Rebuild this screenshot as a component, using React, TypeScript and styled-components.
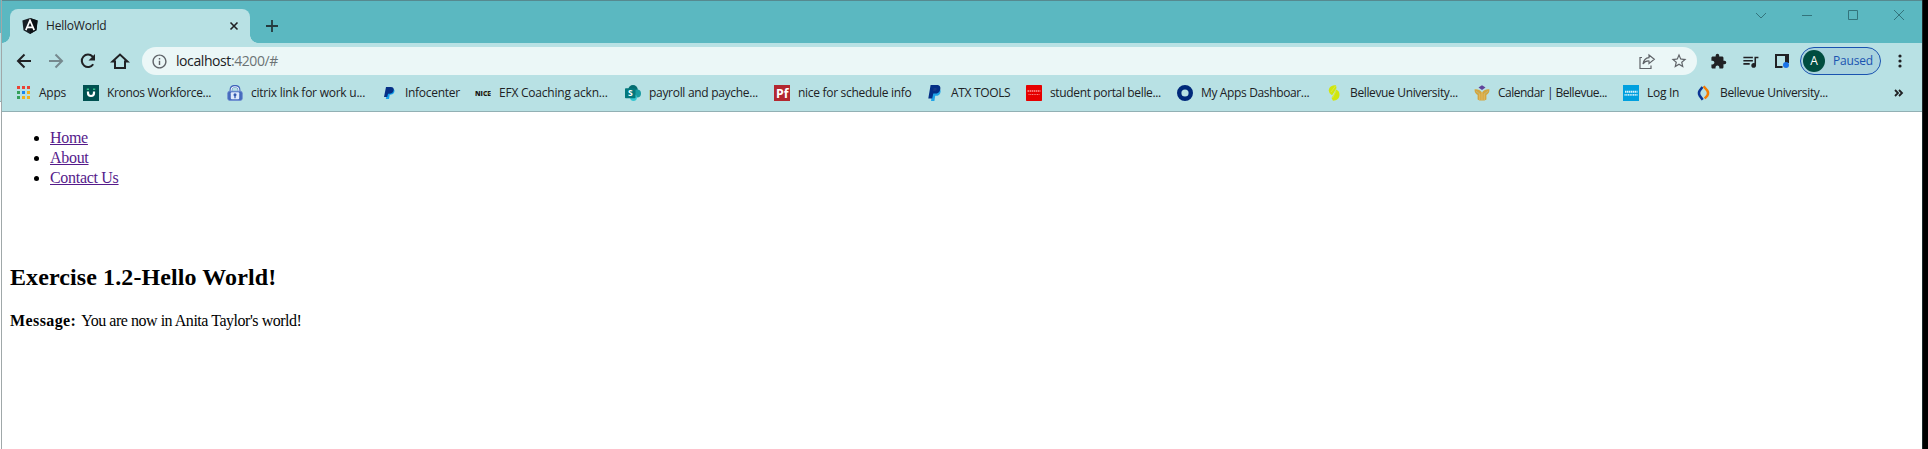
import React from 'react';
import styled, { createGlobalStyle } from 'styled-components';
import { MdExtension, MdQueueMusic, MdStarBorder, MdInfoOutline } from 'react-icons/md';

const ui = '"Open Sans", "Noto Sans", sans-serif';

const GlobalStyle = createGlobalStyle`
  * { box-sizing: border-box; }
  body { margin: 0; background: #fff; overflow: hidden; }
`;

const Desktop = styled.div`
  display: grid;
  grid-template-columns: 1px 1921px 6px;
  height: 449px;
  background: #fff;
`;
const WindowBehind = styled.div`
  background: linear-gradient(#5bb8c1 0 33px, #b8e1e4 33px 101px, #92adb0 101px 102px, #fff 102px);
`;
const ScreenEdge = styled.div`
  background: #000;
  border-left: 1px solid #1c2a2b;
`;
const Browser = styled.main`
  display: flex;
  flex-direction: column;
  border-left: 1px solid #a0a8a9;
  background: #fff;
`;
const TabStrip = styled.header`
  display: flex;
  align-items: flex-end;
  height: 43px;
  border-top: 1px solid #56898f;
  background: #5bb8c1;
  padding-left: 8px;
`;
const Tab = styled.div`
  position: relative;
  display: flex;
  align-items: center;
  width: 240px;
  height: 34px;
  padding: 0 10px 0 12px;
  border-radius: 8px 8px 0 0;
  background: #b8e1e4;
  &::before, &::after {
    content: '';
    position: absolute;
    bottom: 0;
    width: 8px;
    height: 8px;
  }
  &::before { left: -8px; background: radial-gradient(circle at 0 0, transparent 7.5px, #b8e1e4 8px); }
  &::after { right: -8px; background: radial-gradient(circle at 100% 0, transparent 7.5px, #b8e1e4 8px); }
`;
const TabTitle = styled.span`
  flex: 1;
  margin-left: 8px;
  font: 12px/16px ${ui};
  letter-spacing: -0.2px;
  color: #202124;
`;
const NewTab = styled.div`
  display: flex;
  align-items: center;
  height: 34px;
  margin-left: 16px;
`;
const WindowButtons = styled.div`
  display: flex;
  align-self: flex-start;
  gap: 30px;
  margin: 6px 15px 0 auto;
`;
const Toolbar = styled.nav`
  display: flex;
  align-items: center;
  height: 36px;
  padding-left: 12px;
  background: #b8e1e4;
`;
const NavButtons = styled.div`
  display: flex;
  flex: none;
  gap: 12px;
  width: 128px;
`;
const Omnibox = styled.div`
  display: flex;
  flex: none;
  align-items: center;
  width: 1555px;
  height: 28px;
  padding: 0 9px;
  border-radius: 14px;
  background: #ebf7f7;
  color: #5f6368;
`;
const Url = styled.span`
  flex: 1;
  margin-left: 8px;
  font: 14px/20px ${ui};
  letter-spacing: -0.42px;
  color: #6c7375;
  b { font-weight: 400; color: #202124; }
`;
const OmniActions = styled.div`
  display: flex;
  align-items: center;
  gap: 14px;
`;
const Extensions = styled.div`
  display: flex;
  align-items: center;
  gap: 14px;
  margin: 0 10px 0 13px;
  color: #202124;
`;
const Profile = styled.div`
  display: flex;
  flex: none;
  align-items: center;
  width: 81px;
  height: 28px;
  margin-right: 11px;
  padding-left: 2px;
  border: 1px solid #1a53b0;
  border-radius: 14px;
  background: #abd4de;
  font: 12px/16px ${ui};
  letter-spacing: -0.2px;
  color: #1a53b0;
`;
const Avatar = styled.span`
  width: 22px;
  height: 22px;
  margin-right: 8px;
  border-radius: 50%;
  background: #004d40;
  color: #fff;
  font: 12px/22px ${ui};
  text-align: center;
`;
const BookmarkBar = styled.nav`
  display: flex;
  align-items: center;
  gap: 16px;
  height: 33px;
  padding: 0 18px 5px 13px;
  border-bottom: 1px solid #92b0b4;
  background: #b8e1e4;
`;
const Bookmark = styled.div`
  display: flex;
  align-items: center;
  flex: none;
  gap: 8px;
`;
const BookmarkLabel = styled.span<{ $width: number; $spacing: number }>`
  width: ${(p) => p.$width}px;
  font: 12px/16px ${ui};
  letter-spacing: ${(p) => p.$spacing}px;
  white-space: nowrap;
  color: #202124;
`;
const Overflow = styled.div`
  display: flex;
  margin-left: auto;
`;
const Page = styled.section`
  padding: 16px 8px 0;
  font: 16px/20px "Liberation Serif", serif;
  color: #000;
`;
const Links = styled.ul`
  margin: 0 0 75px;
  padding-left: 40px;
`;
const PageLink = styled.a`
  color: #551a8b;
  text-decoration: underline;
  letter-spacing: -0.3px;
`;
const Heading = styled.h2`
  margin: 0 0 20px;
  font-size: 24px;
  line-height: 28px;
  letter-spacing: 0.1px;
`;
const Message = styled.p`
  margin: 0;
  letter-spacing: -0.47px;
  b { margin-right: 2px; letter-spacing: 0.4px; }
`;

const Svg = ({ size = 16, children }: { size?: number; children: React.ReactNode }) => (
  <svg width={size} height={size} viewBox={`0 0 ${size} ${size}`} fill="none">{children}</svg>
);

const PayPal = () => (
  <Svg>
    <path d="M6 4h6.500c1.500 1 1.300 3.100.6 4.500-.7 1.600-2.100 2.300-4 2.300H8.200L7.400 16H4z" fill="#1fa4e8" />
    <path d="M3.600 0h5.800c3.500 0 4.500 2 3.800 4.700-.7 2.800-2.500 3.900-5.300 3.900H6.300L5.200 13.400H1.300z" fill="#042f86" />
    <path d="M6.700 3h1.600c1.300 0 1.700.6 1.400 1.600-.3 1-1 1.300-2.100 1.300H6z" fill="#173a86" />
  </Svg>
);
const PayPalSmall = () => (
  <Svg>
    <path d="M7 4h5.700c1.200 1 .9 3-.1 4.300-.8 1-2 1.400-3.300 1.400h-.6L8 14H4.800z" fill="#14a0ea" />
    <path d="M5 2h4.800c2.500 0 3.300 1.500 2.800 3.500C12 7.800 10.500 8.700 8.400 8.700H7L6.200 12H3z" fill="#062f87" />
  </Svg>
);
const AppsGrid = () => {
  const colors = ['#ea4335', '#ea4335', '#ea4335', '#34a05a', '#1a86f0', '#f2b01e', '#34a05a', '#f2b01e', '#f2b01e'];
  return (
    <Svg>
      {colors.map((c, i) => <rect key={i} x={2 + (i % 3) * 5} y={1 + Math.floor(i / 3) * 5} width="3" height="3" fill={c} />)}
    </Svg>
  );
};
const Kronos = () => (
  <Svg>
    <rect width="16" height="16" fill="#005151" />
    <path d="M5 6.500V8a3 3 0 0 0 6 0V6.500" stroke="#fff" strokeWidth="2.200" />
    <path d="M3.800 4.200H6M10 4.200h2.200" stroke="#35c58b" strokeWidth="1.500" />
  </Svg>
);
const Citrix = () => (
  <Svg>
    <path d="M3.900 7V5C3.900 2.500 5.300 1.200 8 1.200s4.100 1.300 4.100 3.800v2" stroke="#3f63ba" strokeWidth="2.600" />
    <path d="M4.200 7V5C4.200 3 5.500 1.700 8 1.700S11.800 3 11.800 5v2" stroke="#f3f8ff" strokeWidth="1.100" />
    <rect x=".7" y="6.200" width="14.600" height="9.200" rx="2" fill="#4569bd" stroke="#6b8ad0" strokeWidth=".8" />
    <rect x="3.800" y="7.200" width="8.400" height="7" rx="1" fill="#dfe9fb" />
    <circle cx="8" cy="9.800" r="1.500" fill="#3459b0" />
    <path d="M8 10v3.200" stroke="#3459b0" strokeWidth="1.300" />
  </Svg>
);
const Nice = () => (
  <Svg>
    <text x="0" y="10.800" fontSize="7" fontWeight="800" fontFamily="Open Sans, sans-serif" textLength="16" lengthAdjust="spacingAndGlyphs" fill="#161616">NICE</text>
    <path d="M8.500 8.300h1.800M13 8.300h2" stroke="#c79b27" strokeWidth=".7" />
  </Svg>
);
const SharePoint = () => (
  <Svg>
    <circle cx="8" cy="4.800" r="4.800" fill="#036c70" />
    <circle cx="12" cy="8.500" r="4" fill="#1a9ba1" />
    <circle cx="8.500" cy="12.600" r="3.400" fill="#37c6d0" />
    <rect y="3.300" width="10.500" height="10" rx=".8" fill="#03787c" />
    <text x="5.300" y="11.300" textAnchor="middle" fontSize="8.500" fontWeight="700" fontFamily="Open Sans, sans-serif" fill="#fff">S</text>
  </Svg>
);
const Pf = () => (
  <Svg>
    <rect width="16" height="16" fill="#b3272f" />
    <text x="2" y="12.500" fontSize="12" fontWeight="700" fontFamily="Open Sans, sans-serif" textLength="12.500" lengthAdjust="spacingAndGlyphs" fill="#fff">Pf</text>
  </Svg>
);
const Oracle = () => (
  <Svg>
    <rect width="16" height="16" rx=".7" fill="#e60000" />
    <path d="M1.500 6h13" stroke="#ff9d9d" strokeWidth="1.300" strokeDasharray="1.500 .6" />
    <path d="M2.500 9.500h11" stroke="#f58080" strokeWidth="1.100" strokeDasharray="1.100 .6" />
  </Svg>
);
const Ring = () => (
  <Svg><circle cx="8" cy="8" r="5.800" stroke="#00297a" strokeWidth="4.400" /></Svg>
);
const Swirl = () => (
  <Svg>
    <path d="M10 .2C6 .1 2.800 2 2.800 5.200c0 2.200 1.300 3.800 3.300 5L8 7.500 10.500 3z" fill="#d0e60e" />
    <path d="M10 4.500c2.600 1 3.500 2.700 3.500 5.200 0 3.500-2.600 5.900-6.500 6L5.500 13 8 9z" fill="#d0e60e" />
    <path d="M9.500 1 5 7M10 6l-3.500 7" stroke="#e5ef76" strokeWidth=".5" />
  </Svg>
);
const Tulip = () => (
  <Svg>
    <path d="M.6 4.300C3 3.800 6 4.500 8 7.500c2-3 5-3.700 7.400-3.200.3 3-1 4.700-3 5.700v4.500L10.500 15.500h-5L3.600 14.500V10C1.600 9 .3 7.300.6 4.300" fill="#d4a63f" />
    <path d="m8 .3 3.500 2.200L8 5 4.500 2.500z" fill="#60439a" />
    <path d="M8 7v8M5.800 9v6M10.200 9v6" stroke="#e9c470" strokeWidth=".8" />
    <path d="M2 6.300 6 9M14 6.300 10 9" stroke="#b8c193" strokeWidth=".7" />
  </Svg>
);
const DailyAccess = () => (
  <Svg>
    <rect width="16" height="16" fill="#00a0df" />
    <path d="M2 6.800h12.500" stroke="#d8f2fc" strokeWidth="2" strokeDasharray="1.500 .5" />
    <path d="M1.500 9.800h13" stroke="#c5ebfa" strokeWidth="1.800" strokeDasharray="1.200 .5" />
  </Svg>
);
const Hoops = () => (
  <Svg>
    <path d="M6.500 2 3.800 5.500c-1 1.500-1 3.500-.2 5L6.700 14.800" stroke="#0b3595" strokeWidth="2.500" />
    <path d="m7.600 1.200 3.600 4.300c1 1.500 1 3.500.2 5L8.700 13.500" stroke="#f57c00" strokeWidth="2.500" />
  </Svg>
);

const bookmarks: { icon: React.ReactNode; text: string; width: number; spacing: number }[] = [
  { icon: <AppsGrid />, text: 'Apps', width: 28, spacing: -0.25 },
  { icon: <Kronos />, text: 'Kronos Workforce...', width: 104, spacing: -0.34 },
  { icon: <Citrix />, text: 'citrix link for work u...', width: 114, spacing: -0.24 },
  { icon: <PayPalSmall />, text: 'Infocenter', width: 54, spacing: -0.3 },
  { icon: <Nice />, text: 'EFX Coaching ackn...', width: 110, spacing: -0.22 },
  { icon: <SharePoint />, text: 'payroll and payche...', width: 109, spacing: -0.3 },
  { icon: <Pf />, text: 'nice for schedule info', width: 113, spacing: -0.3 },
  { icon: <PayPal />, text: 'ATX TOOLS', width: 59, spacing: -0.34 },
  { icon: <Oracle />, text: 'student portal belle...', width: 111, spacing: -0.36 },
  { icon: <Ring />, text: 'My Apps Dashboar...', width: 109, spacing: -0.36 },
  { icon: <Swirl />, text: 'Bellevue University...', width: 108, spacing: -0.36 },
  { icon: <Tulip />, text: 'Calendar | Bellevue...', width: 109, spacing: -0.5 },
  { icon: <DailyAccess />, text: 'Log In', width: 33, spacing: -0.3 },
  { icon: <Hoops />, text: 'Bellevue University...', width: 108, spacing: -0.36 },
];

export default function App() {
  return (
    <>
      <GlobalStyle />
      <Desktop>
        <WindowBehind />
        <Browser>
          <TabStrip>
            <Tab>
              <Svg>
                <path d="M8 0 15.600 2.600 14.500 12.200 8 16 1.500 12.200.4 2.600z" fill="#182026" />
                <path d="M8 0v16l6.500-3.800 1.100-9.600z" fill="#0b1115" />
                <path d="M3.800 12.200 8 2.500l4.200 9.700M5.600 9.300h4.800" stroke="#fff" strokeWidth="1.700" />
              </Svg>
              <TabTitle>HelloWorld</TabTitle>
              <Svg size={12}><path d="m2.500 2.500 7 7m0-7-7 7" stroke="#202124" strokeWidth="1.600" /></Svg>
            </Tab>
            <NewTab><Svg size={12}><path d="M6 0v12M0 6h12" stroke="#253a3e" strokeWidth="1.800" /></Svg></NewTab>
            <WindowButtons>
              <Svg><path d="m3 6 5 5 5-5" stroke="#33747c" /></Svg>
              <Svg><path d="M3 8.500h10" stroke="#33747c" /></Svg>
              <Svg><path d="M3.500 3.500h9v9h-9z" stroke="#33747c" /></Svg>
              <Svg><path d="m3 3 10 10M13 3 3 13" stroke="#33747c" /></Svg>
            </WindowButtons>
          </TabStrip>
          <Toolbar>
            <NavButtons>
              <Svg size={20}><path d="M17 10H4m6.500-6.500L4 10l6.500 6.500" stroke="#202124" strokeWidth="2" /></Svg>
              <Svg size={20}><path d="M3 10h13M9.500 3.500 16 10l-6.500 6.500" stroke="#76898e" strokeWidth="2" /></Svg>
              <Svg size={20}>
                <path d="M15.200 13.200A6.200 6.200 0 1 1 14.500 5.500L16 7" stroke="#202124" strokeWidth="2" />
                <path d="M17 3v6.500h-6.500z" fill="#202124" />
              </Svg>
              <Svg size={20}><path d="M2.500 10.500 10 3.500l7.500 7H15V17H5v-6.500z" stroke="#202124" strokeWidth="2" /></Svg>
            </NavButtons>
            <Omnibox>
              <MdInfoOutline size={17} />
              <Url><b>localhost</b>:4200/#</Url>
              <OmniActions>
                <Svg size={18}>
                  <path d="M4 5.500H2v11h11V13.500" stroke="#5f6368" strokeWidth="1.200" />
                  <path d="M11 3 16.300 7.300 11 11.600V9C8.500 8.800 6.500 9.800 5 12c.6-3.600 2.500-6 6-6.300z" stroke="#5f6368" strokeWidth="1.200" />
                </Svg>
                <MdStarBorder size={18} />
              </OmniActions>
            </Omnibox>
            <Extensions>
              <MdExtension size={17} />
              <MdQueueMusic size={19} />
              <Svg>
                <path d="M8.500 14H2V2h11v7" stroke="#202124" strokeWidth="2" />
                <path d="M11 1h4v9h-4z" fill="#202124" />
                <circle cx="12" cy="12" r="3" fill="#1a73e8" />
              </Svg>
            </Extensions>
            <Profile><Avatar>A</Avatar>Paused</Profile>
            <Svg><circle cx="8" cy="3" r="1.600" fill="#202124" /><circle cx="8" cy="8" r="1.600" fill="#202124" /><circle cx="8" cy="13" r="1.600" fill="#202124" /></Svg>
          </Toolbar>
          <BookmarkBar>
            {bookmarks.map((b, i) => (
              <Bookmark key={i}>
                {b.icon}
                <BookmarkLabel $width={b.width} $spacing={b.spacing}>{b.text}</BookmarkLabel>
              </Bookmark>
            ))}
            <Overflow><Svg size={10}><path d="m1 2 3 3-3 3m4-6 3 3-3 3" stroke="#202124" strokeWidth="1.800" /></Svg></Overflow>
          </BookmarkBar>
          <Page>
            <Links>
              <li><PageLink href="#">Home</PageLink></li>
              <li><PageLink href="#">About</PageLink></li>
              <li><PageLink href="#">Contact Us</PageLink></li>
            </Links>
            <Heading>Exercise 1.2-Hello World!</Heading>
            <Message><b>Message:</b> You are now in Anita Taylor's world!</Message>
          </Page>
        </Browser>
        <ScreenEdge />
      </Desktop>
    </>
  );
}
